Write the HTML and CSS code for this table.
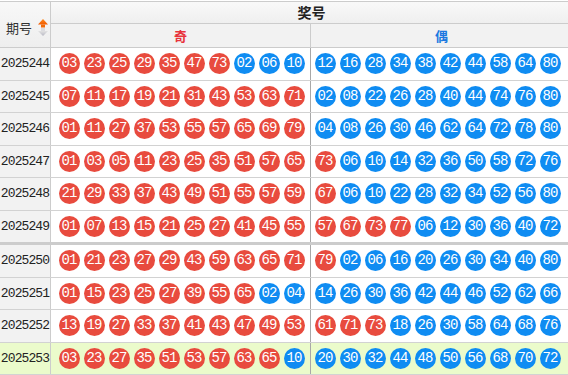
FILE: index.html
```html
<!DOCTYPE html>
<html lang="zh-CN">
<head>
<meta charset="utf-8">
<title>奖号</title>
<link rel="stylesheet" href="styles.css">
</head>
<body>
<div class="tbl">
  <div class="head">
    <div class="h-period">
      <span>期号</span>
      <svg class="sort" width="10" height="17" viewBox="0 0 10 17">
        <defs>
          <linearGradient id="og" x1="0" y1="0" x2="0" y2="1">
            <stop offset="0" stop-color="#ff8a1e"/>
            <stop offset="1" stop-color="#f05a00"/>
          </linearGradient>
          <linearGradient id="gg" x1="0" y1="0" x2="0" y2="1">
            <stop offset="0" stop-color="#e2e2e2"/>
            <stop offset="1" stop-color="#b8b8c4"/>
          </linearGradient>
        </defs>
        <polygon points="5,0 10,5.5 0,5.5" fill="url(#og)"/>
        <rect x="3" y="5.5" width="4" height="3" fill="#f26a08"/>
        <rect x="3" y="9" width="4" height="3" fill="#dcdce0"/>
        <polygon points="0,12 10,12 5,17" fill="url(#gg)"/>
      </svg>
    </div>
    <div class="h-right">
      <div class="h-title">奖号</div>
      <div class="h-sub">
        <div class="h-odd">奇</div>
        <div class="h-even">偶</div>
      </div>
    </div>
  </div>

  <div class="row">
    <div class="p">2025244</div>
    <div class="odd"><span class="b r">03</span><span class="b r">23</span><span class="b r">25</span><span class="b r">29</span><span class="b r">35</span><span class="b r">47</span><span class="b r">73</span><span class="b e">02</span><span class="b e">06</span><span class="b e">10</span></div>
    <div class="even"><span class="b e">12</span><span class="b e">16</span><span class="b e">28</span><span class="b e">34</span><span class="b e">38</span><span class="b e">42</span><span class="b e">44</span><span class="b e">58</span><span class="b e">64</span><span class="b e">80</span></div>
  </div>
  <div class="row">
    <div class="p">2025245</div>
    <div class="odd"><span class="b r">07</span><span class="b r">11</span><span class="b r">17</span><span class="b r">19</span><span class="b r">21</span><span class="b r">31</span><span class="b r">43</span><span class="b r">53</span><span class="b r">63</span><span class="b r">71</span></div>
    <div class="even"><span class="b e">02</span><span class="b e">08</span><span class="b e">22</span><span class="b e">26</span><span class="b e">28</span><span class="b e">40</span><span class="b e">44</span><span class="b e">74</span><span class="b e">76</span><span class="b e">80</span></div>
  </div>
  <div class="row">
    <div class="p">2025246</div>
    <div class="odd"><span class="b r">01</span><span class="b r">11</span><span class="b r">27</span><span class="b r">37</span><span class="b r">53</span><span class="b r">55</span><span class="b r">57</span><span class="b r">65</span><span class="b r">69</span><span class="b r">79</span></div>
    <div class="even"><span class="b e">04</span><span class="b e">08</span><span class="b e">26</span><span class="b e">30</span><span class="b e">46</span><span class="b e">62</span><span class="b e">64</span><span class="b e">72</span><span class="b e">78</span><span class="b e">80</span></div>
  </div>
  <div class="row">
    <div class="p">2025247</div>
    <div class="odd"><span class="b r">01</span><span class="b r">03</span><span class="b r">05</span><span class="b r">11</span><span class="b r">23</span><span class="b r">25</span><span class="b r">35</span><span class="b r">51</span><span class="b r">57</span><span class="b r">65</span></div>
    <div class="even"><span class="b r">73</span><span class="b e">06</span><span class="b e">10</span><span class="b e">14</span><span class="b e">32</span><span class="b e">36</span><span class="b e">50</span><span class="b e">58</span><span class="b e">72</span><span class="b e">76</span></div>
  </div>
  <div class="row">
    <div class="p">2025248</div>
    <div class="odd"><span class="b r">21</span><span class="b r">29</span><span class="b r">33</span><span class="b r">37</span><span class="b r">43</span><span class="b r">49</span><span class="b r">51</span><span class="b r">55</span><span class="b r">57</span><span class="b r">59</span></div>
    <div class="even"><span class="b r">67</span><span class="b e">06</span><span class="b e">10</span><span class="b e">22</span><span class="b e">28</span><span class="b e">32</span><span class="b e">34</span><span class="b e">52</span><span class="b e">56</span><span class="b e">80</span></div>
  </div>
  <div class="row sep">
    <div class="p">2025249</div>
    <div class="odd"><span class="b r">01</span><span class="b r">07</span><span class="b r">13</span><span class="b r">15</span><span class="b r">21</span><span class="b r">25</span><span class="b r">27</span><span class="b r">41</span><span class="b r">45</span><span class="b r">55</span></div>
    <div class="even"><span class="b r">57</span><span class="b r">67</span><span class="b r">73</span><span class="b r">77</span><span class="b e">06</span><span class="b e">12</span><span class="b e">30</span><span class="b e">36</span><span class="b e">40</span><span class="b e">72</span></div>
  </div>
  <div class="row">
    <div class="p">2025250</div>
    <div class="odd"><span class="b r">01</span><span class="b r">21</span><span class="b r">23</span><span class="b r">27</span><span class="b r">29</span><span class="b r">43</span><span class="b r">59</span><span class="b r">63</span><span class="b r">65</span><span class="b r">71</span></div>
    <div class="even"><span class="b r">79</span><span class="b e">02</span><span class="b e">06</span><span class="b e">16</span><span class="b e">20</span><span class="b e">26</span><span class="b e">30</span><span class="b e">34</span><span class="b e">40</span><span class="b e">80</span></div>
  </div>
  <div class="row">
    <div class="p">2025251</div>
    <div class="odd"><span class="b r">01</span><span class="b r">15</span><span class="b r">23</span><span class="b r">25</span><span class="b r">27</span><span class="b r">39</span><span class="b r">55</span><span class="b r">65</span><span class="b e">02</span><span class="b e">04</span></div>
    <div class="even"><span class="b e">14</span><span class="b e">26</span><span class="b e">30</span><span class="b e">36</span><span class="b e">42</span><span class="b e">44</span><span class="b e">46</span><span class="b e">52</span><span class="b e">62</span><span class="b e">66</span></div>
  </div>
  <div class="row">
    <div class="p">2025252</div>
    <div class="odd"><span class="b r">13</span><span class="b r">19</span><span class="b r">27</span><span class="b r">33</span><span class="b r">37</span><span class="b r">41</span><span class="b r">43</span><span class="b r">47</span><span class="b r">49</span><span class="b r">53</span></div>
    <div class="even"><span class="b r">61</span><span class="b r">71</span><span class="b r">73</span><span class="b e">18</span><span class="b e">26</span><span class="b e">30</span><span class="b e">58</span><span class="b e">64</span><span class="b e">68</span><span class="b e">76</span></div>
  </div>
  <div class="row last">
    <div class="p">2025253</div>
    <div class="odd"><span class="b r">03</span><span class="b r">23</span><span class="b r">27</span><span class="b r">35</span><span class="b r">51</span><span class="b r">53</span><span class="b r">57</span><span class="b r">63</span><span class="b r">65</span><span class="b e">10</span></div>
    <div class="even"><span class="b e">20</span><span class="b e">30</span><span class="b e">32</span><span class="b e">44</span><span class="b e">48</span><span class="b e">50</span><span class="b e">56</span><span class="b e">68</span><span class="b e">70</span><span class="b e">72</span></div>
  </div>
</div>
</body>
</html>
```

FILE: styles.css
```css
html, body {
  margin: 0;
  padding: 0;
  background: #ffffff;
  overflow: hidden;
}
body {
  padding-top: 1px;
  font-family: "Noto Sans CJK SC", "Liberation Sans", sans-serif;
  color: #333333;
}
.tbl {
  width: 572px;
  border-top: 1px solid #cccccc;
}
.head {
  display: flex;
  border-bottom: 1px solid #cccccc;
}
.h-period {
  width: 44px;
  padding-left: 6px;
  padding-top: 5px;
  height: 40px;
  border-right: 1px solid #cccccc;
  background: linear-gradient(#f8f8f8, #eeeeee);
  display: flex;
  align-items: center;
  gap: 6px;
  font-size: 13px;
}
.sort {
  display: block;
}
.h-right {
  flex: 1;
}
.h-title {
  height: 21px;
  line-height: 21px;
  border-bottom: 1px solid #cccccc;
  background: linear-gradient(#f9f9f9, #efefef);
  text-align: center;
  font-weight: bold;
  font-size: 14px;
  color: #222222;
}
.h-sub {
  display: flex;
  height: 23px;
  line-height: 23px;
  background: #f2f2f2;
  font-size: 13px;
  font-weight: bold;
  text-align: center;
}
.h-odd {
  width: 259px;
  border-right: 1px solid #cccccc;
  color: #e8343c;
}
.h-even {
  flex: 1;
  color: #1a78e0;
}
.row {
  display: flex;
  height: 31.5px;
  border-bottom: 1px solid #d2d2d2;
}
.row.sep {
  border-bottom: 3px solid #cccccc;
}
.row.last {
  background: #ebfbcb;
}
.p {
  width: 50px;
  border-right: 1px solid #cccccc;
  background: #f2f2f2;
  display: flex;
  align-items: center;
  justify-content: center;
  font-family: "Liberation Mono", monospace;
  font-size: 13px;
  letter-spacing: -0.9px;
  color: #222222;
}
.row.last .p {
  background: #ebfbcb;
}
.odd {
  width: 251px;
  padding-left: 8px;
  border-right: 1px solid #a8a8a8;
  display: flex;
  align-items: center;
  gap: 4px;
}
.even {
  flex: 1;
  padding-left: 4px;
  display: flex;
  align-items: center;
  gap: 4px;
}
.b {
  flex: none;
  width: 21px;
  height: 21px;
  border-radius: 50%;
  color: #ffffff;
  font-family: "Liberation Mono", monospace;
  font-size: 14px;
  letter-spacing: -1px;
  text-indent: -1px;
  line-height: 21px;
  text-align: center;
}
.b.r {
  background: #e84b3e;
}
.b.e {
  background: #0f8cf2;
}
```
